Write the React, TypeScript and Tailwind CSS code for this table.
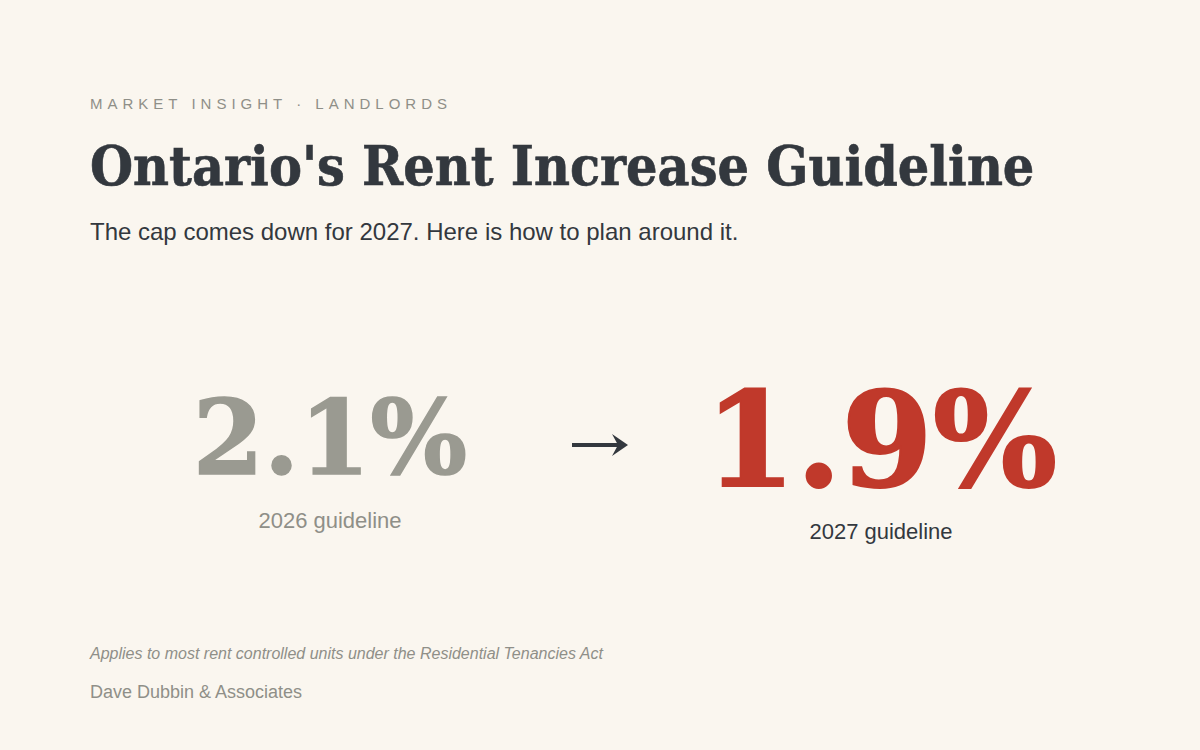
const serif = { fontFamily: '"DejaVu Serif", Georgia, serif' };

export default function App() {
  return (
    <div className="w-full h-[750px] bg-[#faf6ef] px-[90px] flex flex-col overflow-hidden" style={{ fontFamily: '"Liberation Sans", Arial, sans-serif' }}>
      <div className="pt-[95px] text-[15px] leading-[18px] tracking-[5px] text-[#8f8f88]">MARKET INSIGHT · LANDLORDS</div>
      <h1 className="mt-[21px] text-[55px] leading-[64px] font-bold font-stretch-condensed whitespace-nowrap text-[#33383e] [-webkit-text-stroke:0.6px_#33383e]" style={serif}>
        Ontario's Rent Increase Guideline
      </h1>
      <p className="mt-[20px] text-[24px] leading-[28px] text-[#33383e]">The cap comes down for 2027. Here is how to plan around it.</p>
      <div className="mt-[129px] flex items-center justify-center">
        <div className="w-[402px] flex flex-col items-center">
          <div className="text-[102px] leading-[102px] font-bold text-[#9a9a91] [-webkit-text-stroke:1.5px_#9a9a91]" style={serif}>2.1%</div>
          <div className="mt-[19px] text-[22px] leading-[26px] text-[#8f8f88]">2026 guideline</div>
        </div>
        <svg className="ml-[41px] mr-[63px] -mt-[30px]" width="56" height="22" viewBox="0 0 56 22" fill="#33383e">
          <rect x="0" y="9" width="50" height="4" />
          <path d="M40 0 L56 11 L40 22 L46 11 Z" />
        </svg>
        <div className="w-[380px] flex flex-col items-center">
          <div className="text-[131px] leading-[131px] font-bold text-[#c0392b] [-webkit-text-stroke:2px_#c0392b]" style={serif}>1.9%</div>
          <div className="mt-[13px] text-[22px] leading-[26px] text-[#33383e]">2027 guideline</div>
        </div>
      </div>
      <div className="mt-auto pb-[47px]">
        <p className="text-[16px] leading-[20px] italic text-[#8f8f88]">Applies to most rent controlled units under the Residential Tenancies Act</p>
        <p className="mt-[17px] text-[18px] leading-[22px] text-[#8f8f88]">Dave Dubbin &amp; Associates</p>
      </div>
    </div>
  );
}
